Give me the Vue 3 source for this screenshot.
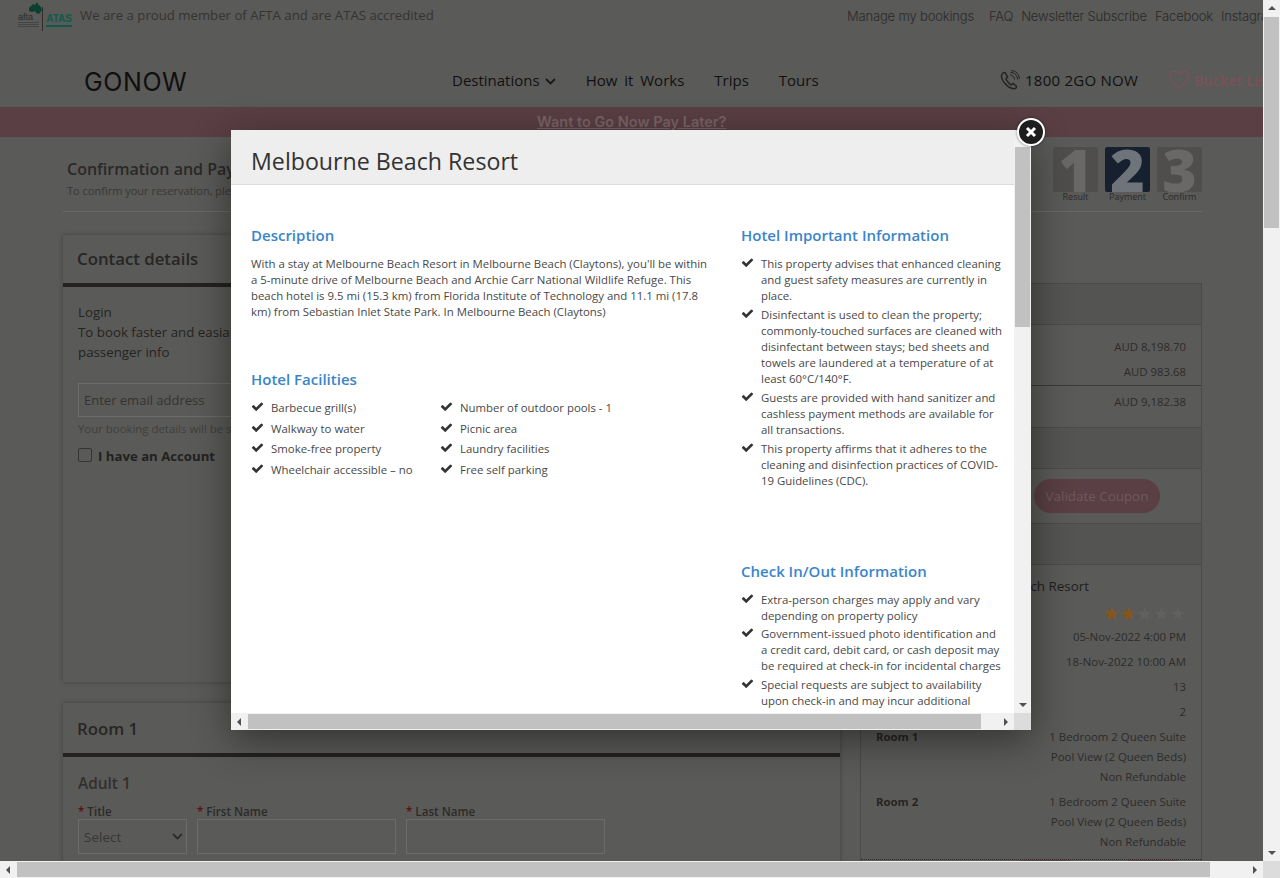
<script setup>
const facilities = [
  'Barbecue grill(s)', 'Number of outdoor pools - 1',
  'Walkway to water', 'Picnic area',
  'Smoke-free property', 'Laundry facilities',
  'Wheelchair accessible – no', 'Free self parking'
]
// line breaks follow the reference, the font here runs a little wider
const important = [
  'This property advises that enhanced cleaning\nand guest safety measures are currently in\nplace.',
  'Disinfectant is used to clean the property;\ncommonly-touched surfaces are cleaned with\ndisinfectant between stays; bed sheets and\ntowels are laundered at a temperature of at\nleast 60°C/140°F.',
  'Guests are provided with hand sanitizer and\ncashless payment methods are available for\nall transactions.',
  'This property affirms that it adheres to the\ncleaning and disinfection practices of COVID-\n19 Guidelines (CDC).'
]
const checkIn = [
  'Extra-person charges may apply and vary\ndepending on property policy',
  'Government-issued photo identification and\na credit card, debit card, or cash deposit may\nbe required at check-in for incidental charges',
  'Special requests are subject to availability\nupon check-in and may incur additional\ncharges; special requests cannot be guaranteed'
]
const steps = [
  { n: 1, label: 'Result' },
  { n: 2, label: 'Payment', active: true },
  { n: 3, label: 'Confirm' }
]
const CHECK = 'M1671 566q0 40-28 68l-724 724-136 136q-28 28-68 28t-68-28l-136-136-362-362q-28-28-28-68t28-68l136-136q28-28 68-28t68 28l294 295 656-657q28-28 68-28t68 28l136 136q28 28 28 68z'
</script>

<template>
  <div class="window">
    <div class="viewport">
      <div class="page">
        <div class="topbar">
          <div class="top-left">
            <div class="badges">
              <div class="afta">
                <svg class="aus" width="15" height="14" viewBox="0 0 15 14"><path d="M1 6 5 2l2 1 2-3 1 2 3 3 1 3-3 4-3-1-1-2-3 1-3-1z" fill="#0b4030" /></svg>
                <span class="afta-name">afta</span>
                <i></i><i></i><i></i>
              </div>
              <div class="atas"><span>ATAS</span><i></i></div>
            </div>
            <span class="proud">We are a proud member of AFTA and are ATAS accredited</span>
          </div>
          <nav class="top-links">
            <a class="manage">Manage my bookings</a>
            <a>FAQ</a>
            <a>Newsletter Subscribe</a>
            <a>Facebook</a>
            <a>Instagram</a>
          </nav>
        </div>

        <div class="mainnav">
          <div class="logo">GONOW</div>
          <div class="nav-links">
            <a class="dest">Destinations
              <svg width="11" height="7" viewBox="0 0 11 7"><path d="M1 1l4.500 4.500L10 1" fill="none" stroke="#1a1a1a" stroke-width="1.800" /></svg>
            </a>
            <a class="how">How it Works</a>
            <a>Trips</a>
            <a>Tours</a>
          </div>
          <div class="phone">
            <svg width="20" height="20" viewBox="0 0 20 20" fill="none" stroke="#232325" stroke-width="1.400">
              <path d="M2 4c-1 2 0 6 3 9.500s6 5 9 5.300c1.500 0 2.500-1 2.600-2.300l-3.400-3-2 1.400C9.500 14 6.500 10.800 6 8.800l1.700-1.700L5 2.500C3.700 2.600 2.600 3 2 4z" />
              <path d="M10 5c2.500 0 4.500 2 4.500 4.500M10.500 2.500c4 0 7 3 7 7M11 .7c5 0 8.300 3.500 8.300 8.300" stroke-width="1" />
            </svg>
            <span>1800 2GO NOW</span>
          </div>
          <div class="bucket">
            <svg width="22" height="20" viewBox="0 0 22 20"><path d="M11 18.500C6 14 1.200 10.500 1.200 6.200 1.200 3.300 3.400 1.300 6 1.300c2 0 3.800 1 5 3 1.200-2 3-3 5-3 2.600 0 4.800 2 4.800 4.900 0 4.300-4.800 7.800-9.800 12.300z" fill="none" stroke="#7a525b" stroke-width="1.400" /></svg>
            <span>Bucket List</span>
          </div>
        </div>

        <div class="banner"><a>Want to Go Now Pay Later?</a></div>

        <div class="content">
          <div class="title-row">
            <div>
              <h1>Confirmation and Payment</h1>
              <p>To confirm your reservation, please complete the details below</p>
            </div>
            <div class="steps">
              <div v-for="s in steps" :key="s.n" class="step">
                <div class="step-box" :class="{ active: s.active }">{{ s.n }}</div>
                <span>{{ s.label }}</span>
              </div>
            </div>
          </div>

          <div class="columns">
            <div class="left-col">
              <section class="card contact">
                <h2>Contact details</h2>
                <div class="card-body">
                  <p class="login">Login<br />To book faster and easiar, login to use your saved<br />passenger info</p>
                  <div class="email">Enter email address</div>
                  <p class="help">Your booking details will be sent to this email address</p>
                  <label class="account"><span class="box"></span><b>I have an Account</b></label>
                </div>
              </section>
              <section class="card room-card">
                <h2>Room 1</h2>
                <div class="card-body">
                  <h3>Adult 1</h3>
                  <div class="fields">
                    <div class="field f-title">
                      <label><em>*</em> Title</label>
                      <div class="input select">Select
                        <svg width="11" height="7" viewBox="0 0 11 7"><path d="M1 1l4.500 4.500L10 1" fill="none" stroke="#2c2c2c" stroke-width="1.800" /></svg>
                      </div>
                    </div>
                    <div class="field f-name"><label><em>*</em> First Name</label><div class="input"></div></div>
                    <div class="field f-name"><label><em>*</em> Last Name</label><div class="input"></div></div>
                  </div>
                </div>
              </section>
            </div>

            <aside class="right-col">
              <div class="panel">
                <div class="panel-head"></div>
                <div class="prices">
                  <div class="row">AUD 8,198.70</div>
                  <div class="row">AUD 983.68</div>
                </div>
                <div class="total">
                  <div class="row">AUD 9,182.38</div>
                </div>
                <div class="panel-head"></div>
                <div class="coupon"><button>Validate Coupon</button></div>
                <div class="panel-head"></div>
                <div class="hotel">
                  <div class="hotel-name">Melbourne Beach Resort</div>
                  <div class="stars"><span class="on">★★</span>★★★</div>
                  <div class="row first">05-Nov-2022 4:00 PM</div>
                  <div class="row">18-Nov-2022 10:00 AM</div>
                  <div class="row">13</div>
                  <div class="row">2</div>
                  <div class="room first"><b>Room 1</b><span>1 Bedroom 2 Queen Suite<br />Pool View (2 Queen Beds)<br />Non Refundable</span></div>
                  <div class="room"><b>Room 2</b><span>1 Bedroom 2 Queen Suite<br />Pool View (2 Queen Beds)<br />Non Refundable</span></div>
                </div>
                <div class="actions"><button></button><button></button></div>
              </div>
            </aside>
          </div>
        </div>
      </div>
    </div>

    <div class="scroll-v page-v">
      <i class="arrow up"></i><div class="thumb"></div><i class="arrow down"></i>
    </div>
    <div class="scroll-h page-h">
      <i class="arrow left"></i><div class="thumb"></div><i class="arrow right"></i>
    </div>
    <div class="corner"></div>

    <div class="modal">
      <div class="modal-pane">
        <header class="modal-head"><h2>Melbourne Beach Resort</h2></header>
        <div class="modal-body">
          <div class="m-left">
            <h4>Description</h4>
            <p class="desc">With a stay at Melbourne Beach Resort in Melbourne Beach (Claytons), you'll be within a 5-minute drive of Melbourne Beach and Archie Carr National Wildlife Refuge. This beach hotel is 9.5 mi (15.3 km) from Florida Institute of Technology and 11.1 mi (17.8 km) from Sebastian Inlet State Park. In Melbourne Beach (Claytons)</p>
            <h4 class="facilities-title">Hotel Facilities</h4>
            <ul class="facilities">
              <li v-for="f in facilities" :key="f">
                <svg width="13" height="13" viewBox="0 0 1792 1792"><path :d="CHECK" /></svg>{{ f }}
              </li>
            </ul>
          </div>
          <div class="m-right">
            <h4>Hotel Important Information</h4>
            <ul class="checks">
              <li v-for="t in important" :key="t">
                <svg width="13" height="13" viewBox="0 0 1792 1792"><path :d="CHECK" /></svg>{{ t }}
              </li>
            </ul>
            <h4 class="checkin-title">Check In/Out Information</h4>
            <ul class="checks checkin">
              <li v-for="t in checkIn" :key="t">
                <svg width="13" height="13" viewBox="0 0 1792 1792"><path :d="CHECK" /></svg>{{ t }}
              </li>
            </ul>
          </div>
        </div>
      </div>
      <div class="scroll-v modal-v">
        <i class="arrow up"></i><div class="thumb"></div><i class="arrow down"></i>
      </div>
      <div class="scroll-h modal-h">
        <i class="arrow left"></i><div class="thumb"></div><i class="arrow right"></i>
      </div>
      <div class="corner"></div>
      <button class="close" aria-label="Close">
        <svg width="12" height="12" viewBox="0 0 12 12"><path d="M2 2l8 8M10 2l-8 8" stroke="#fff" stroke-width="3" /></svg>
      </button>
    </div>
  </div>
</template>

<style scoped>
.window {
  position: relative;
  width: 1280px;
  height: 878px;
  overflow: hidden;
  display: grid;
  grid-template-columns: 1263px 17px;
  grid-template-rows: 861px 17px;
  font-family: "Open Sans", "Noto Sans", sans-serif;
  color: #2a2927;
}
.viewport {
  overflow: hidden;
  background: #5a5a58;
}
.page {
  width: 1301px;
}
a { color: inherit; }
h1, h2, h3, h4, p, ul { margin: 0; padding: 0; }
ul { list-style: none; }

/* top strip */
.topbar {
  display: flex;
  align-items: center;
  height: 32px;
  padding-left: 18px;
  font-size: 13.200px;
  color: #33322f;
}
.top-left {
  display: flex;
  align-items: center;
  width: 829px;
  gap: 8px;
  color: #353432;
}
.proud { margin-top: -2px; }
.badges { display: flex; gap: 3px; height: 28px; width: 54px; margin-top: -3px; }
.afta { position: relative; width: 24px; }
.aus { position: absolute; left: 10px; top: 1px; }
.afta-name {
  position: absolute;
  left: 0;
  top: 11px;
  font: 9px/10px "Liberation Sans", sans-serif;
  color: #2c2c2b;
}
.afta i {
  display: block;
  position: relative;
  top: 21px;
  height: 1px;
  margin-bottom: 1px;
  background: #454543;
}
.atas {
  border-left: 1px solid #2e2e2c;
  padding: 7px 0 0 3px;
  width: 27px;
  height: 17px;
  margin-top: 6px;
  color: #0e5a4c;
  font: bold 10px/10px "Liberation Sans", sans-serif;
  white-space: nowrap;
}
.atas i { display: block; height: 2px; margin-top: 1px; background: #0e5a4c; }
.top-links {
  display: flex;
  gap: 8px;
  font-family: Inter, sans-serif;
  font-weight: 300;
  font-size: 13px;
  letter-spacing: -0.170px;
  color: #2a2a2a;
  white-space: nowrap;
}
.manage { margin-right: 7px; }

/* main nav */
.mainnav {
  display: flex;
  align-items: center;
  height: 75px;
  box-sizing: border-box;
  padding: 21px 0 0 84px;
}
.logo {
  width: 368px;
  font-family: Inter, sans-serif;
  font-size: 25px;
  font-weight: 400;
  letter-spacing: 0.600px;
  color: #0f0f0f;
  padding-top: 3px;
}
.nav-links {
  display: flex;
  gap: 30px;
  width: 548px;
  font-size: 15px;
  font-weight: 500;
  color: #111;
}
.how { word-spacing: 3px; }
.dest { display: flex; align-items: center; gap: 5px; }
.dest svg { margin-top: 3px; }
.phone {
  display: flex;
  align-items: center;
  gap: 5px;
  width: 168px;
  font-size: 15px;
  font-weight: 500;
  letter-spacing: 0.250px;
  color: #111;
}
.bucket {
  display: flex;
  align-items: center;
  gap: 4px;
  font-size: 14.500px;
  font-weight: 600;
  color: #7a525b;
  white-space: nowrap;
}
.banner {
  height: 30px;
  background: #5a3f44;
  padding-left: 537px;
  line-height: 30px;
  font-family: Inter, sans-serif;
  font-size: 14.500px;
  font-weight: 600;
  color: #7a6367;
}
.banner a { text-decoration: underline; }

/* page content */
.content { margin-left: 63px; width: 1139px; }
.title-row {
  display: flex;
  justify-content: space-between;
  height: 75px;
  border-bottom: 1px solid #6a6966;
  box-sizing: border-box;
}
.title-row h1 {
  padding: 21px 0 0 4px;
  font-size: 16px;
  line-height: 22px;
  font-weight: 600;
  color: #2a2927;
}
.title-row p {
  padding: 3px 0 0 4px;
  font-size: 11px;
  line-height: 16px;
  color: #393836;
}
.steps { display: flex; gap: 7px; padding-top: 10px; }
.step { width: 45px; text-align: center; font-size: 9px; line-height: 10px; color: #2c2b29; }
.step span { display: block; }
.step-box {
  height: 45px;
  border-radius: 2px;
  background: #4f4e4d;
  color: #696867;
  font: 800 59px/44px "Open Sans", sans-serif;
  overflow: hidden;
}
.step-box.active { background: #17202f; color: #6f747b; }

.columns {
  display: flex;
  gap: 20px;
  margin-top: 23px;
}
.left-col { width: 777px; display: flex; flex-direction: column; gap: 21px; }
.card {
  box-shadow: 0 0 4px rgba(0, 0, 0, .3);
}
.contact { height: 447px; }
.card h2 {
  height: 48px;
  line-height: 48px;
  padding-left: 14px;
  font-size: 16.800px;
  font-weight: 600;
  color: #272624;
  border-bottom: 4px solid #232220;
}
.room-card h2 { height: 50px; line-height: 52px; }
.card-body { padding: 15px; }
.login { font-size: 13.300px; line-height: 20px; color: #252422; }
.email {
  margin-top: 21px;
  width: 300px;
  height: 34px;
  box-sizing: border-box;
  border: 1px solid #6d6c69;
  padding-left: 5px;
  font-size: 13px;
  line-height: 32px;
  color: #353432;
}
.help { margin-top: 4px; font-size: 11.400px; line-height: 16px; color: #403f3d; }
.account {
  display: flex;
  align-items: center;
  gap: 6px;
  margin-top: 10px;
  font-size: 13.200px;
  color: #232220;
}
.box { width: 12px; height: 12px; border: 1px solid #353432; border-radius: 2px; margin-top: -3px; }
.card h3 { font-size: 15.400px; line-height: 24px; font-weight: 600; color: #31302e; }
.fields { display: flex; gap: 10px; margin-top: 10px; }
.field label {
  display: block;
  font-size: 11.600px;
  line-height: 12px;
  font-weight: 600;
  color: #2c2b29;
  margin-bottom: 1px;
}
.field em { color: #5c0f12; font-style: normal; }
.input {
  height: 35px;
  box-sizing: border-box;
  border: 1px solid #6d6c69;
}
.f-title { width: 109px; }
.f-name { width: 199px; }
.select {
  display: flex;
  align-items: center;
  justify-content: space-between;
  padding: 0 3px 0 5px;
  font-size: 13.500px;
  color: #383735;
}

.right-col { width: 342px; margin-top: 48px; font-size: 11.400px; color: #2d2c2a; }
.panel { border: 1px solid #4b4a48; border-bottom: 0; box-sizing: border-box; }
.panel-head {
  height: 41px;
  background: #545452;
  border-bottom: 1px solid #4b4a48;
  box-sizing: border-box;
}
.row {
  padding: 0 15px;
  text-align: right;
  line-height: 25px;
}
.prices { padding: 9px 0 1px; border-bottom: 1px solid #3c3b39; }
.total { padding: 3px 0 13px; border-bottom: 1px solid #4b4a48; }
.coupon {
  height: 55px;
  box-sizing: border-box;
  padding: 10px 41px 0 0;
  text-align: right;
  border-bottom: 1px solid #4b4a48;
}
.coupon button {
  width: 126px;
  height: 34px;
  border: 0;
  border-radius: 17px;
  background: #5a3f44;
  color: #6f5a5e;
  font: 13.400px "Open Sans", sans-serif;
}
.hotel { padding-top: 11px; border-bottom: 1px dotted #2f2e2c; padding-bottom: 2px; }
.hotel-name {
  padding-right: 112px;
  text-align: right;
  font-size: 13.400px;
  line-height: 20px;
  color: #1f1e1c;
}
.stars {
  text-align: right;
  padding-right: 15px;
  margin-top: 9px;
  font: 18.500px/18px "DejaVu Sans", sans-serif;
  color: #626160;
}
.stars .on { color: #8a5616; }
.row.first { margin-top: 1px; }
.room {
  display: flex;
  justify-content: space-between;
  padding: 0 15px;
  line-height: 20px;
  margin-bottom: 5px;
}
.room.first { margin-top: 3px; }
.room span { text-align: right; }
.room b { color: #262523; }
.actions { display: flex; gap: 32px; padding-left: 146px; }
.actions button {
  width: 76px;
  height: 34px;
  border: 0;
  border-radius: 17px;
  background: #5a3f44;
}

/* scrollbars */
.scroll-v, .scroll-h {
  display: flex;
  align-items: center;
  justify-content: space-between;
  background: #f1f1f1;
}
.scroll-v { flex-direction: column; width: 17px; }
.scroll-h { height: 17px; }
.thumb { background: #c1c1c1; }
.arrow { width: 0; height: 0; border: 4px solid transparent; flex: none; }
.up { border-bottom-color: #505050; border-top-width: 0; margin: 6px 0; }
.down { border-top-color: #505050; border-bottom-width: 0; margin: 6px 0; }
.left { border-right-color: #505050; border-left-width: 0; margin: 0 6px; }
.right { border-left-color: #505050; border-right-width: 0; margin: 0 6px; }
.corner { background: #dcdcdc; width: 17px; height: 17px; }
.page-v .thumb { width: 15px; height: 211px; margin-bottom: auto; margin-top: 1px; }
.page-h .thumb { height: 15px; width: 1193px; margin-right: auto; margin-left: 1px; }

/* modal */
.modal {
  position: absolute;
  left: 231px;
  top: 130px;
  width: 800px;
  height: 600px;
  display: grid;
  grid-template-columns: 783px 17px;
  grid-template-rows: 583px 17px;
  background: #fff;
  box-shadow: 0 10px 40px rgba(0, 0, 0, .45);
  border-radius: 2px 2px 0 0;
}
.modal-pane { overflow: hidden; }
.modal-head {
  height: 55px;
  box-sizing: border-box;
  background: #eee;
  border-bottom: 1px solid #dcdcdc;
  padding-left: 20px;
}
.modal-head h2 {
  font-size: 23.200px;
  line-height: 62px;
  font-weight: 500;
  color: #333;
}
.modal-body {
  display: flex;
  padding: 40px 0 0 20px;
  font-size: 11.400px;
  line-height: 16px;
  color: #484848;
}
.m-left { width: 490px; }
.m-right { width: 262px; }
.modal-body h4 {
  font-size: 15px;
  line-height: 20px;
  font-weight: 600;
  color: #3a85c9;
}
.desc { width: 465px; margin-top: 11px; }
.facilities-title { margin-top: 49px; }
.facilities {
  display: grid;
  grid-template-columns: 189px 1fr;
  grid-auto-rows: 20.500px;
  margin-top: 9px;
}
.facilities li { padding-left: 20px; position: relative; line-height: 20.500px; }
.checks { margin-top: 11px; }
.checks li { position: relative; padding-left: 20px; margin-bottom: 3px; white-space: pre-line; }
.checkin li:first-child { margin-bottom: 2px; }
.checkin-title { margin-top: 72px; }
.modal-body svg { position: absolute; left: 0; top: 0; fill: #333; }
.facilities svg { top: 2px; }
.modal-v .thumb { width: 15px; height: 180px; margin-top: 1px; margin-bottom: auto; }
.modal-v .up { visibility: hidden; }
.modal-h .thumb { height: 15px; width: 733px; margin-right: auto; margin-left: 1px; }
.close {
  position: absolute;
  right: -14px;
  top: -12px;
  width: 28px;
  height: 28px;
  box-sizing: border-box;
  padding: 0;
  display: flex;
  align-items: center;
  justify-content: center;
  background: #1d1d1d;
  border: 2px solid #fff;
  border-radius: 50%;
  box-shadow: 0 0 3px rgba(0, 0, 0, .5);
}
</style>

<style>
html, body { margin: 0; overflow: hidden; }
</style>
